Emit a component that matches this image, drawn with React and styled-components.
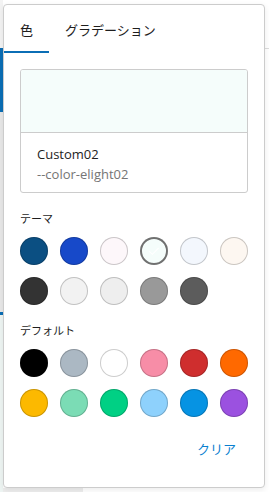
import React from "react";
import styled, { createGlobalStyle } from "styled-components";

const Global = createGlobalStyle`
  html, body { margin: 0; padding: 0; background: #ffffff; }
  body { font-family: "Noto Sans", "Noto Sans CJK JP", sans-serif; -webkit-font-smoothing: antialiased; }
  * { box-sizing: border-box; }
`;

const Page = styled.div`
  position: relative;
  width: 269px;
  height: 492px;
  overflow: hidden;
  display: flex;
  background: #fff;
`;

const Strip = styled.div`
  width: 3px;
  display: flex;
  flex-direction: column;
`;

const StripPart = styled.div`
  height: ${(p) => p.h}px;
  background: ${(p) => p.c};
`;

const Backdrop = styled.div`
  flex: 1;
  display: flex;
  flex-direction: column;
`;

const BackLine = styled.div`
  margin-top: 48px;
  height: 1px;
  background: #dcdcdc;
`;

const BackFill = styled.div`
  flex: 1;
`;

const BackBottom = styled.div`
  height: 4px;
  width: 80px;
  background: #ededed;
`;

const Popover = styled.div`
  position: absolute;
  left: 3px;
  top: 4px;
  width: 262px;
  height: 484px;
  background: #fff;
  border: 1px solid #cccccc;
  border-radius: 4px;
  box-shadow: 0 2px 6px rgba(0, 0, 0, 0.08);
  display: flex;
  flex-direction: column;
`;

const Tabs = styled.div`
  display: flex;
  height: 48px;
`;

const Tab = styled.div`
  padding: 0 16px;
  display: flex;
  align-items: center;
  font-size: 13px;
  color: #1e1e1e;
  font-family: "Noto Sans CJK JP", sans-serif;
  box-shadow: ${(p) => (p.active ? "inset 0 -2px 0 #0b6eb5" : "none")};
`;

const Body = styled.div`
  padding: 16px 16px 0 16px;
  display: flex;
  flex-direction: column;
`;

const Card = styled.div`
  border: 1px solid #cccccc;
  border-radius: 3px;
  overflow: hidden;
`;

const Swatch = styled.div`
  height: 63px;
  background: ${(p) => p.c};
  border-bottom: 1px solid #cccccc;
`;

const CardInfo = styled.div`
  padding: 11px 16px 8px;
  display: flex;
  flex-direction: column;
`;

const Name = styled.div`
  font-size: 13px;
  line-height: 20px;
  color: #1e1e1e;
  font-family: "Open Sans", "Noto Sans", sans-serif;
`;

const Slug = styled.div`
  font-size: 13px;
  line-height: 20px;
  color: #757575;
  font-family: "Open Sans", "Noto Sans", sans-serif;
`;

const Section = styled.div`
  margin-top: ${(p) => p.mt}px;
  display: flex;
  flex-direction: column;
`;

const Label = styled.div`
  font-size: 11px;
  line-height: 18px;
  color: #1e1e1e;
  font-family: "Noto Sans CJK JP", sans-serif;
  margin-bottom: 10px;
`;

const Grid = styled.div`
  display: grid;
  grid-template-columns: repeat(6, 28px);
  gap: 12px;
`;

const Circle = styled.div`
  width: 28px;
  height: 28px;
  border-radius: 50%;
  background: ${(p) => p.c};
  box-shadow: ${(p) =>
    p.selected
      ? "inset 0 0 0 2px #707070"
      : "inset 0 0 0 1px rgba(0,0,0,0.2)"};
  display: flex;
  align-items: center;
  justify-content: center;
`;

const Footer = styled.div`
  margin-top: 13px;
  display: flex;
  justify-content: flex-end;
`;

const ClearButton = styled.button`
  height: 36px;
  padding: 0 12px;
  border: none;
  background: transparent;
  color: #0a7fcf;
  font-size: 13px;
  font-family: "Noto Sans CJK JP", sans-serif;
  cursor: pointer;
`;

const theme = [
  "#0b4f82",
  "#1749c9",
  "#fdf7fa",
  "#f5fdfb",
  "#f3f7fd",
  "#fdf7f1",
  "#333333",
  "#f2f2f2",
  "#eeeeee",
  "#999999",
  "#5c5c5c",
];

const defaults = [
  "#000000",
  "#abb8c3",
  "#ffffff",
  "#f78da7",
  "#cf2e2e",
  "#ff6900",
  "#fcb900",
  "#7bdcb5",
  "#00d084",
  "#8ed1fc",
  "#0693e3",
  "#9b51e0",
];

const Check = () => (
  <svg width="16" height="16" viewBox="0 0 24 24">
    <path d="M5 12.5l4.5 4.5L19 7.5" fill="none" stroke="#ffffff" strokeWidth="1.6" />
  </svg>
);

export default function App() {
  return (
    <>
      <Global />
      <Page>
        <Strip>
          <StripPart h={48} c="#f3f3f3" />
          <StripPart h={64} c="#0b6eb5" />
          <StripPart h={200} c="#e8e8e8" />
          <StripPart h={3} c="#0b6eb5" />
          <StripPart h={177} c="#eef5f3" />
        </Strip>
        <Backdrop>
          <BackLine />
          <BackFill />
          <BackBottom />
        </Backdrop>
        <Popover>
          <Tabs>
            <Tab active>色</Tab>
            <Tab>グラデーション</Tab>
          </Tabs>
          <Body>
            <Card>
              <Swatch c="#f5fdfb" />
              <CardInfo>
                <Name>Custom02</Name>
                <Slug>--color-elight02</Slug>
              </CardInfo>
            </Card>
            <Section mt={16}>
              <Label>テーマ</Label>
              <Grid>
                {theme.map((c, i) => (
                  <Circle key={i} c={c} selected={i === 3}>
                    {i === 3 && <Check />}
                  </Circle>
                ))}
              </Grid>
            </Section>
            <Section mt={16}>
              <Label>デフォルト</Label>
              <Grid>
                {defaults.map((c, i) => (
                  <Circle key={i} c={c} />
                ))}
              </Grid>
            </Section>
            <Footer>
              <ClearButton>クリア</ClearButton>
            </Footer>
          </Body>
        </Popover>
      </Page>
    </>
  );
}
